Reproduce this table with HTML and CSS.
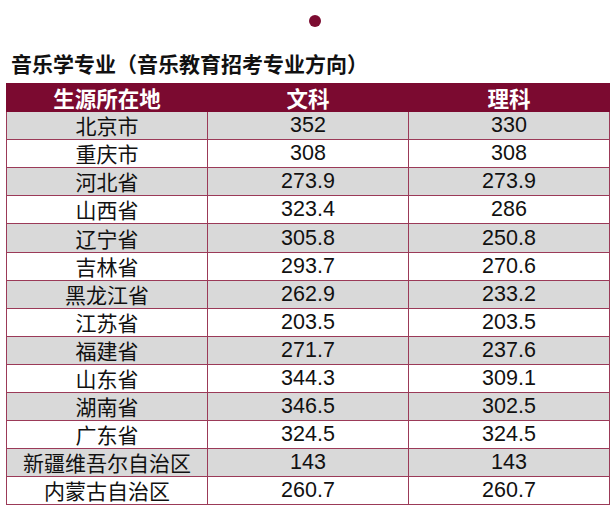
FILE: index.html
```html
<!DOCTYPE html>
<html lang="zh">
<head>
<meta charset="utf-8">
<link rel="stylesheet" href="styles.css">
</head>
<body>
<div class="page">
  <div class="dot"></div>
  <h1 class="title">音乐学专业（音乐教育招考专业方向）</h1>
  <table class="scores">
    <thead>
      <tr><th>生源所在地</th><th>文科</th><th>理科</th></tr>
    </thead>
    <tbody>
      <tr><td>北京市</td><td>352</td><td>330</td></tr>
      <tr><td>重庆市</td><td>308</td><td>308</td></tr>
      <tr><td>河北省</td><td>273.9</td><td>273.9</td></tr>
      <tr><td>山西省</td><td>323.4</td><td>286</td></tr>
      <tr><td>辽宁省</td><td>305.8</td><td>250.8</td></tr>
      <tr><td>吉林省</td><td>293.7</td><td>270.6</td></tr>
      <tr><td>黑龙江省</td><td>262.9</td><td>233.2</td></tr>
      <tr><td>江苏省</td><td>203.5</td><td>203.5</td></tr>
      <tr><td>福建省</td><td>271.7</td><td>237.6</td></tr>
      <tr><td>山东省</td><td>344.3</td><td>309.1</td></tr>
      <tr><td>湖南省</td><td>346.5</td><td>302.5</td></tr>
      <tr><td>广东省</td><td>324.5</td><td>324.5</td></tr>
      <tr><td>新疆维吾尔自治区</td><td>143</td><td>143</td></tr>
      <tr><td>内蒙古自治区</td><td>260.7</td><td>260.7</td></tr>
    </tbody>
  </table>
</div>
</body>
</html>
```
FILE: styles.css
```css
html, body {
  margin: 0;
  padding: 0;
  background: #ffffff;
}
.page {
  font-family: "Liberation Sans", "Noto Sans CJK SC", sans-serif;
  color: #111111;
  padding-top: 15px;
}
.dot {
  width: 12px;
  height: 12px;
  border-radius: 50%;
  background: #7c0c31;
  margin-left: 309px;
}
.title {
  margin: 22px 0 0 11px;
  font-family: "Noto Sans CJK SC", sans-serif;
  font-size: 21px;
  line-height: 28px;
  font-weight: 700;
  color: #111111;
}
.scores {
  margin: 6px 0 0 6px;
  border-collapse: collapse;
  table-layout: fixed;
  width: 601px;
}
.scores th,
.scores td {
  width: 200px;
  height: 27.1px;
  padding: 0;
  text-align: center;
  font-size: 21.5px;
  line-height: 27px;
}
.scores th {
  background: #7b0a30;
  color: #ffffff;
  font-family: "Noto Sans CJK SC", sans-serif;
  font-weight: 700;
  border: 1px solid #7b0a30;
  border-left-color: #e8b4c2;
}
.scores th:first-child {
  border-left-color: #7b0a30;
}
.scores td {
  border: 1px solid #9b3a58;
  color: #111111;
}
.scores td:first-child {
  font-family: "Noto Sans CJK SC", sans-serif;
  font-size: 21px;
}
.scores tbody tr:nth-child(odd) td {
  background: #d9d9d9;
}
```
